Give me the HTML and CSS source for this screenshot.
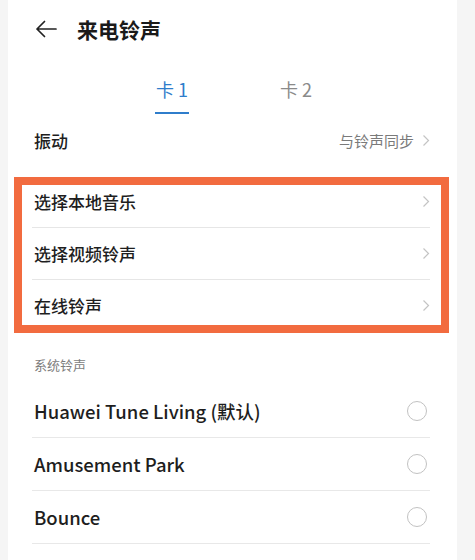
FILE: index.html
```html
<!DOCTYPE html>
<html lang="zh">
<head>
<meta charset="utf-8">
<link rel="stylesheet" href="styles.css">
</head>
<body>
<div class="screen">
  <header class="header">
    <svg class="back" width="22" height="18" viewBox="0 0 22 18"><path d="M21 9H2M9.5 1.5L2 9l7.5 7.5" fill="none" stroke="#222" stroke-width="1.7" stroke-linecap="round" stroke-linejoin="round"/></svg>
    <h1 class="title">来电铃声</h1>
  </header>
  <nav class="tabs">
    <div class="tab active">卡 1</div>
    <div class="tab">卡 2</div>
  </nav>
  <div class="row vib">
    <span class="label">振动</span>
    <span class="value">与铃声同步<svg class="chev" width="8" height="13" viewBox="0 0 8 13"><path d="M1.5 1.5l5 5-5 5" fill="none" stroke="#c4c4c4" stroke-width="1.2"/></svg></span>
  </div>
  <div class="list">
    <div class="row line"><span class="label">选择本地音乐</span><svg class="chev" width="8" height="13" viewBox="0 0 8 13"><path d="M1.5 1.5l5 5-5 5" fill="none" stroke="#c4c4c4" stroke-width="1.2"/></svg></div>
    <div class="row line"><span class="label">选择视频铃声</span><svg class="chev" width="8" height="13" viewBox="0 0 8 13"><path d="M1.5 1.5l5 5-5 5" fill="none" stroke="#c4c4c4" stroke-width="1.2"/></svg></div>
    <div class="row"><span class="label">在线铃声</span><svg class="chev" width="8" height="13" viewBox="0 0 8 13"><path d="M1.5 1.5l5 5-5 5" fill="none" stroke="#c4c4c4" stroke-width="1.2"/></svg></div>
    <div class="highlight"></div>
  </div>
  <div class="section">系统铃声</div>
  <div class="tones">
    <div class="tone"><span class="name">Huawei Tune Living (默认)</span><span class="radio"></span></div>
    <div class="tone"><span class="name">Amusement Park</span><span class="radio"></span></div>
    <div class="tone"><span class="name">Bounce</span><span class="radio"></span></div>
  </div>
</div>
</body>
</html>
```
FILE: styles.css
```css
html, body {
  margin: 0;
  padding: 0;
  height: 560px;
  overflow: hidden;
  background: #f5f5f5;
}
body {
  font-family: "Noto Sans CJK SC", "Noto Sans", sans-serif;
  color: #1c1c1c;
}
.screen {
  margin: 0 18px 0 8px;
  height: 560px;
  background: #fff;
  overflow: hidden;
}
.header {
  height: 58px;
  display: flex;
  align-items: center;
  padding-left: 27px;
  gap: 20px;
}
.back { flex: none; }
.title {
  margin: 0;
  font-size: 21px;
  font-weight: 700;
  color: #1a1a1a;
}
.tabs {
  height: 52px;
  display: flex;
  align-items: flex-start;
  padding-left: 147px;
  gap: 90px;
}
.tab {
  font-size: 18px;
  line-height: 22px;
  padding-top: 20px;
  padding-bottom: 12px;
  color: #8a8a8a;
  border-bottom: 2px solid transparent;
  width: 34px;
  text-align: center;
}
.tab.active {
  color: #2f7dcb;
  border-bottom-color: #2f7dcb;
}
.row {
  display: flex;
  align-items: center;
  justify-content: space-between;
  height: 52px;
}
.vib {
  margin: 3px 27px 0 26px;
  height: 54px;
}
.label {
  font-size: 17px;
  font-weight: 500;
  color: #1e1e1e;
}
.value {
  display: flex;
  align-items: center;
  gap: 8px;
  font-size: 15px;
  color: #7a7a7a;
}
.chev { flex: none; }
.list {
  position: relative;
  margin: 9px 27px 0 24px;
}
.list .row { padding: 0 0 0 2px; height: 51px; }
.line { border-bottom: 1px solid #e6e6e6; }
.highlight {
  position: absolute;
  left: -18px;
  right: -19px;
  top: 1px;
  bottom: -2px;
  border: 8px solid #f26b3f;
  pointer-events: none;
}
.section {
  margin: 25px 0 0 26px;
  height: 18px;
  line-height: 18px;
  font-size: 13px;
  color: #7d7d7d;
}
.tones {
  margin: 11px 27px 0 24px;
}
.tone {
  display: flex;
  align-items: center;
  justify-content: space-between;
  height: 53px;
  border-bottom: 1px solid #e8e8e8;
  padding-left: 2px;
  box-sizing: border-box;
}
.name {
  font-size: 18.5px;
  font-weight: 500;
  color: #1e1e1e;
}
.radio {
  width: 18px;
  height: 18px;
  border: 1.4px solid #c2c2c2;
  border-radius: 50%;
  margin-right: 3px;
}
```
